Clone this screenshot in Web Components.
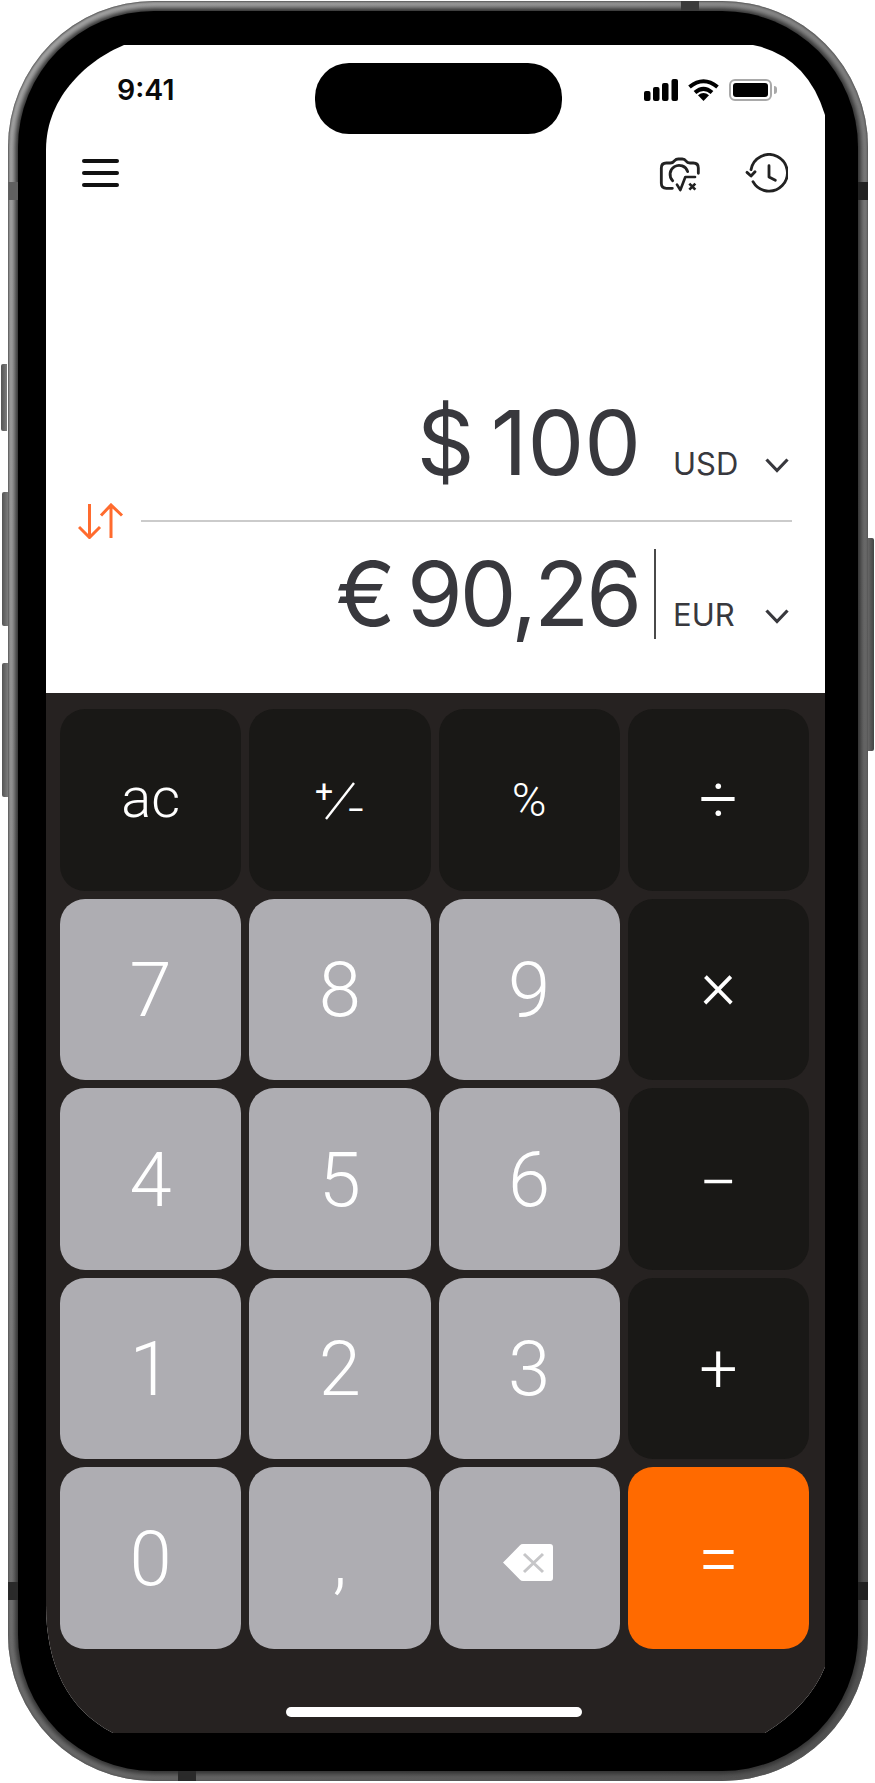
<!doctype html>
<html lang="en">
<head>
<meta charset="utf-8">
<title>Currency calculator</title>
<style>
  html, body { margin: 0; background: #fff; }
</style>
</head>
<body>
<phone-frame>
  <status-bar></status-bar>
  <top-bar></top-bar>
  <currency-display>
    <currency-row style="--tracking:0px;--word-gap:-9px;--value-end:32px" code="USD" symbol="$" amount="100"></currency-row>
    <swap-divider></swap-divider>
    <currency-row code="EUR" symbol="€" amount="90,26" caret></currency-row>
  </currency-display>
  <calc-keypad>
    <calc-key kind="dark" size="ac">ac</calc-key>
    <calc-key kind="dark"><sign-glyph></sign-glyph></calc-key>
    <calc-key kind="dark" size="pct">%</calc-key>
    <calc-key kind="dark" size="op" style="padding-bottom:0">÷</calc-key>
    <calc-key>7</calc-key>
    <calc-key>8</calc-key>
    <calc-key>9</calc-key>
    <calc-key kind="dark" size="op" style="padding-bottom:8px">×</calc-key>
    <calc-key>4</calc-key>
    <calc-key>5</calc-key>
    <calc-key>6</calc-key>
    <calc-key kind="dark" size="op" style="padding:8px 0 0">−</calc-key>
    <calc-key>1</calc-key>
    <calc-key>2</calc-key>
    <calc-key>3</calc-key>
    <calc-key kind="dark" size="op" style="padding:2px 0 0">+</calc-key>
    <calc-key>0</calc-key>
    <calc-key>,</calc-key>
    <calc-key>
      <svg style="margin:7px 3px 0 0" width="50" height="37" viewBox="0 0 50 37" aria-hidden="true">
        <path fill="#fff" d="M0 18.5 17 1.2Q18 0 20 0H47Q50 0 50 3V34Q50 37 47 37H20Q18 37 17 35.8Z"/>
        <path fill="none" stroke="#c6c6c8" stroke-width="3" d="M21 10 40 28M40 10 21 28"/>
      </svg>
    </calc-key>
    <calc-key kind="accent" size="op" style="padding:2px 0 0;font-size:74px">=</calc-key>
  </calc-keypad>
</phone-frame>

<script>
const frameTemplate = document.createElement('template');

frameTemplate.innerHTML = /* html */ `
  <style>
    :host {
      display: block;
      position: relative;
      box-sizing: border-box;
      width: 860px;
      height: 1780px;
      margin: 1px 0 0 8px;
      padding: 10px;
      border-radius: 146px;
      background: linear-gradient(125deg, #a6a6a6 0%, #929292 30%, #6e6e6e 55%, #505050 100%);
      box-shadow: inset 0 0 2px 1px #555;
    }

    .bezel {
      box-sizing: border-box;
      height: 100%;
      padding: 34px 33px 38px 28px;
      border-radius: 136px;
      background: #000;
      box-shadow: 0 0 4px 3px #333;
    }

    .screen {
      position: relative;
      display: flex;
      flex-direction: column;
      width: 779px;
      height: 1688px;
      background: #fff;
      clip-path: path('M78 0H707Q761 11 779 70V1622Q763 1661 719 1688H67C22 1665 0 1620 0 1560V105C0 50 44 14 78 0Z');
    }

    .island {
      position: absolute;
      left: 269px;
      top: 18px;
      width: 247px;
      height: 71px;
      border-radius: 34px;
      background: #000;
    }

    .band, .button {
      position: absolute;
    }

    .band.side { width: 10px; height: 18px; }
    .band.edge { width: 18px; height: 10px; }

    .button {
      width: 6px;
      background: linear-gradient(90deg, #555, #7c7c7c);
      border-radius: 2px 0 0 2px;
    }
  </style>

  <span class="button" style="left:-7px;top:363px;height:67px"></span>
  <span class="button" style="left:-6px;top:491px;height:134px"></span>
  <span class="button" style="left:-6px;top:662px;height:134px"></span>
  <span class="button" style="right:-6px;top:537px;height:213px;border-radius:0 2px 2px 0;background:linear-gradient(90deg,#666,#444)"></span>
  <span class="band side" style="left:0;top:181px;background:#606060"></span>
  <span class="band side" style="right:0;top:181px;background:#222"></span>
  <span class="band side" style="left:0;top:1581px;background:#2a2a2a"></span>
  <span class="band side" style="right:0;top:1581px;background:#222"></span>
  <span class="band edge" style="left:673px;top:0;background:#3b3b3b"></span>
  <span class="band edge" style="left:170px;bottom:0;background:#2a2a2a"></span>
  <div class="bezel">
    <div class="screen">
      <slot></slot>
      <div class="island"></div>
    </div>
  </div>
`;

class PhoneFrame extends HTMLElement {
  constructor() {
    super();
    this.attachShadow({ mode: 'open' }).appendChild(frameTemplate.content.cloneNode(true));
  }
}

const statusTemplate = document.createElement('template');

statusTemplate.innerHTML = /* html */ `
  <style>
    :host {
      display: flex;
      align-items: center;
      justify-content: space-between;
      box-sizing: border-box;
      height: 89px;
      padding: 0 49px 0 71px;
      font: 600 28.5px/1 Inter, sans-serif;
      color: #0a0a0a;
    }

    .icons {
      display: flex;
      align-items: center;
      gap: 10px;
    }

    .time { margin-top: 1px; }

    .battery {
      position: relative;
      box-sizing: border-box;
      width: 43px;
      height: 22px;
      margin-right: 4px;
      padding: 2px;
      border: 2px solid #a9a9a9;
      border-radius: 6px;
    }

    .battery::before {
      content: '';
      display: block;
      height: 100%;
      border-radius: 3px;
      background: #000;
    }

    .battery::after {
      content: '';
      position: absolute;
      right: -7px;
      top: 5px;
      width: 3px;
      height: 8px;
      border-radius: 0 3px 3px 0;
      background: #a9a9a9;
    }
  </style>

  <span class="time">9:41</span>
  <div class="icons">
    <svg width="34" height="22" viewBox="0 0 34 22" aria-hidden="true">
      <rect x="0" y="12" width="6.5" height="10" rx="2"/>
      <rect x="9" y="8" width="6.5" height="14" rx="2"/>
      <rect x="18" y="4" width="6.5" height="18" rx="2"/>
      <rect x="27.5" y="0" width="6.5" height="22" rx="2"/>
    </svg>
    <svg width="31" height="22" viewBox="0 0 31 22" aria-hidden="true">
      <path fill="none" stroke="#000" stroke-width="4" d="M1.5 8Q15.5-3.5 29.5 8M7 13.6Q15.5 6 24 13.6"/>
      <path d="M15.5 22 10 16.3Q15.5 11.8 21 16.3Z"/>
    </svg>
    <span class="battery"></span>
  </div>
`;

class StatusBar extends HTMLElement {
  constructor() {
    super();
    this.attachShadow({ mode: 'open' }).appendChild(statusTemplate.content.cloneNode(true));
  }
}

const topBarTemplate = document.createElement('template');

topBarTemplate.innerHTML = /* html */ `
  <style>
    :host {
      display: flex;
      align-items: center;
      box-sizing: border-box;
      height: 78px;
      padding: 0 37px 0 36px;
    }

    .menu {
      display: flex;
      flex-direction: column;
      gap: 8px;
      margin-right: auto;
    }

    .menu span {
      width: 37px;
      height: 4px;
      border-radius: 2px;
      background: #111;
    }

    svg { fill: none; stroke: #222; stroke-width: 8.5; stroke-linecap: round; stroke-linejoin: round; }
    .camera { margin-right: 44px; }
  </style>

  <div class="menu"><span></span><span></span><span></span></div>
  <svg class="camera" width="42" height="37" viewBox="58 72 126 111" aria-hidden="true">
    <path d="M98 172H80Q65 172 65 157V111Q65 96 80 96H92Q100 96 105 89Q109 84 116 84H128Q135 84 139 90Q143 96 151 96H161Q176 96 176 111V127"/>
    <path d="M99 149A27 27 0 1 1 144 122"/>
    <path stroke-width="8" d="M112 161 122 177 137 138H166"/>
    <path stroke-width="8" stroke-linecap="butt" d="M149 158 167 176M167 158 149 176"/>
  </svg>
  <svg width="43" height="40" viewBox="313 66 129 120" aria-hidden="true">
    <path d="M331 116A55 55 0 1 1 337 152"/>
    <path d="M319 124 331 135 343 122"/>
    <path d="M385 104V138L404 148"/>
  </svg>
`;

class TopBar extends HTMLElement {
  constructor() {
    super();
    this.attachShadow({ mode: 'open' }).appendChild(topBarTemplate.content.cloneNode(true));
  }
}

const displayTemplate = document.createElement('template');

displayTemplate.innerHTML = /* html */ `
  <style>
    :host {
      display: flex;
      flex-direction: column;
      flex: 1;
      padding-top: 181px;
    }
  </style>
  <slot></slot>
`;

class CurrencyDisplay extends HTMLElement {
  constructor() {
    super();
    this.attachShadow({ mode: 'open' }).appendChild(displayTemplate.content.cloneNode(true));
  }
}

const rowTemplate = document.createElement('template');

rowTemplate.innerHTML = /* html */ `
  <style>
    :host {
      display: flex;
      align-items: baseline;
      justify-content: flex-end;
      height: 100px;
      padding-right: 36px;
      font-family: Inter, sans-serif;
      color: #38383d;
    }

    .value {
      position: relative;
      margin-right: var(--value-end, 34px);
      font-size: 90px;
      font-weight: 370;
      line-height: 100px;
      letter-spacing: var(--tracking, -3px);
      word-spacing: var(--word-gap, -8px);
      white-space: pre;
    }

    .caret {
      display: none;
      position: absolute;
      right: -17px;
      top: 5px;
      width: 2px;
      height: 90px;
      background: #4a4a4a;
    }

    :host([caret]) .caret { display: block; }

    .code {
      width: 92px;
      font-size: 31px;
      font-weight: 400;
    }

    svg { align-self: flex-end; margin-bottom: 20px; }
  </style>

  <span class="value"><span class="text"></span><span class="caret"></span></span>
  <span class="code"></span>
  <svg width="24" height="15" viewBox="0 0 24 15" fill="none" stroke="#38383d" stroke-width="3.2" aria-hidden="true">
    <path d="M1.5 1.5 12 12.5 22.5 1.5"/>
  </svg>
`;

class CurrencyRow extends HTMLElement {
  constructor() {
    super();
    const shadowRoot = this.attachShadow({ mode: 'open' });
    shadowRoot.appendChild(rowTemplate.content.cloneNode(true));
    shadowRoot.querySelector('.text').textContent = `${this.getAttribute('symbol')} ${this.getAttribute('amount')}`;
    shadowRoot.querySelector('.code').textContent = this.getAttribute('code');
  }
}

const dividerTemplate = document.createElement('template');

dividerTemplate.innerHTML = /* html */ `
  <style>
    :host {
      display: flex;
      align-items: center;
      height: 36px;
      margin: 10px 33px 5px 32px;
      gap: 17px;
    }

    hr {
      flex: 1;
      height: 2px;
      margin: 0;
      border: 0;
      background: #cbcbcb;
    }
  </style>

  <svg width="46" height="36" viewBox="0 0 46 36" fill="none" stroke="#ff6b2e" stroke-width="3" aria-hidden="true">
    <path d="M11.5 1V34M1 24 11.5 34.5 22 24"/>
    <path d="M33 35V2M23 12.5 33 2 44 12.5"/>
  </svg>
  <hr>
`;

class SwapDivider extends HTMLElement {
  constructor() {
    super();
    this.attachShadow({ mode: 'open' }).appendChild(dividerTemplate.content.cloneNode(true));
  }
}

const keypadTemplate = document.createElement('template');

keypadTemplate.innerHTML = /* html */ `
  <style>
    :host {
      display: block;
      box-sizing: border-box;
      height: 1040px;
      padding: 16px 16px 0 14px;
      background: #262221;
    }

    .grid {
      display: grid;
      grid-template-columns: repeat(4, 1fr);
      grid-auto-rows: 181.5px;
      gap: 8px;
    }

    .home {
      width: 296px;
      height: 10px;
      margin: 58px 0 0 226px;
      border-radius: 5px;
      background: #fff;
    }
  </style>

  <div class="grid"><slot></slot></div>
  <div class="home"></div>
`;

class CalcKeypad extends HTMLElement {
  constructor() {
    super();
    this.attachShadow({ mode: 'open' }).appendChild(keypadTemplate.content.cloneNode(true));
  }
}

const keyTemplate = document.createElement('template');

keyTemplate.innerHTML = /* html */ `
  <style>
    :host {
      display: flex;
      align-items: center;
      justify-content: center;
      border-radius: 25px;
      padding-top: 2px;
      box-sizing: border-box;
      background: #aeadb2;
      color: #fff;
      font: 300 76px/1 Roboto, sans-serif;
    }

    :host([kind="dark"]) { background: #191816; }
    :host([kind="accent"]) { background: #ff6a00; }
    :host([size="ac"]) { font-size: 56px; padding-top: 0; padding-bottom: 3px; }
    :host([size="pct"]) { font-size: 47px; padding-top: 0; }
    :host([size="op"]) { font-size: 68px; padding-top: 0; padding-bottom: 3px; }
  </style>
  <slot></slot>
`;

class CalcKey extends HTMLElement {
  constructor() {
    super();
    this.attachShadow({ mode: 'open' }).appendChild(keyTemplate.content.cloneNode(true));
  }
}

const signTemplate = document.createElement('template');

signTemplate.innerHTML = /* html */ `
  <style>
    :host {
      display: block;
      position: relative;
      width: 46px;
      height: 38px;
      font: 400 32px/1 Roboto, sans-serif;
      color: #fff;
    }

    svg { position: absolute; left: 8px; top: 0; }
    .plus, .minus { position: absolute; }
    .plus { left: -2px; top: -7px; }
    .minus { right: -2px; top: 12px; }
  </style>

  <span class="plus">+</span>
  <svg width="30" height="38" viewBox="0 0 30 38" aria-hidden="true">
    <path stroke="#fff" stroke-width="2.4" d="M1 37 29 1"/>
  </svg>
  <span class="minus">−</span>
`;

class SignGlyph extends HTMLElement {
  constructor() {
    super();
    this.attachShadow({ mode: 'open' }).appendChild(signTemplate.content.cloneNode(true));
  }
}

customElements.define('phone-frame', PhoneFrame);
customElements.define('status-bar', StatusBar);
customElements.define('top-bar', TopBar);
customElements.define('currency-display', CurrencyDisplay);
customElements.define('currency-row', CurrencyRow);
customElements.define('swap-divider', SwapDivider);
customElements.define('calc-keypad', CalcKeypad);
customElements.define('calc-key', CalcKey);
customElements.define('sign-glyph', SignGlyph);
</script>
</body>
</html>
